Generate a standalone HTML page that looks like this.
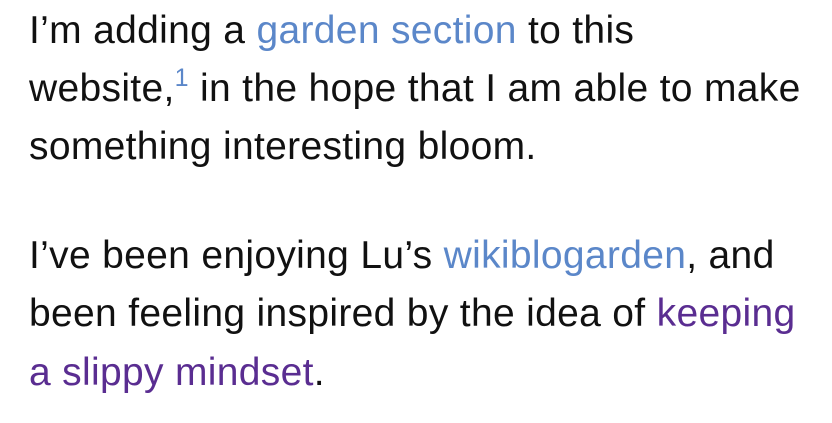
<!DOCTYPE html>
<html><head><meta charset="utf-8"><style>
html,body{margin:0;padding:0;background:#fff;width:832px;height:423px;overflow:hidden}
.l{position:absolute;left:29px;font-family:"Liberation Sans",sans-serif;font-size:39px;line-height:38px;color:#111;white-space:nowrap;letter-spacing:0.32px}
.b{color:#5b87c9}.p{color:#5a2d91}
sup{font-size:25px;vertical-align:0;position:relative;top:-15px;color:#5b87c9}
</style></head><body>
<div class="l" style="top:12px">I’m adding a <span class="b">garden section</span> to this</div>
<div class="l" style="top:70px">website,<sup>1</sup> in the hope that I am able to make</div>
<div class="l" style="top:128px">something interesting bloom.</div>
<div class="l" style="top:237px">I’ve been enjoying Lu’s <span class="b">wikiblogarden</span>, and</div>
<div class="l" style="top:295px">been feeling inspired by the idea of <span class="p">keeping</span></div>
<div class="l" style="top:354px"><span class="p">a slippy mindset</span>.</div>
</body></html>
